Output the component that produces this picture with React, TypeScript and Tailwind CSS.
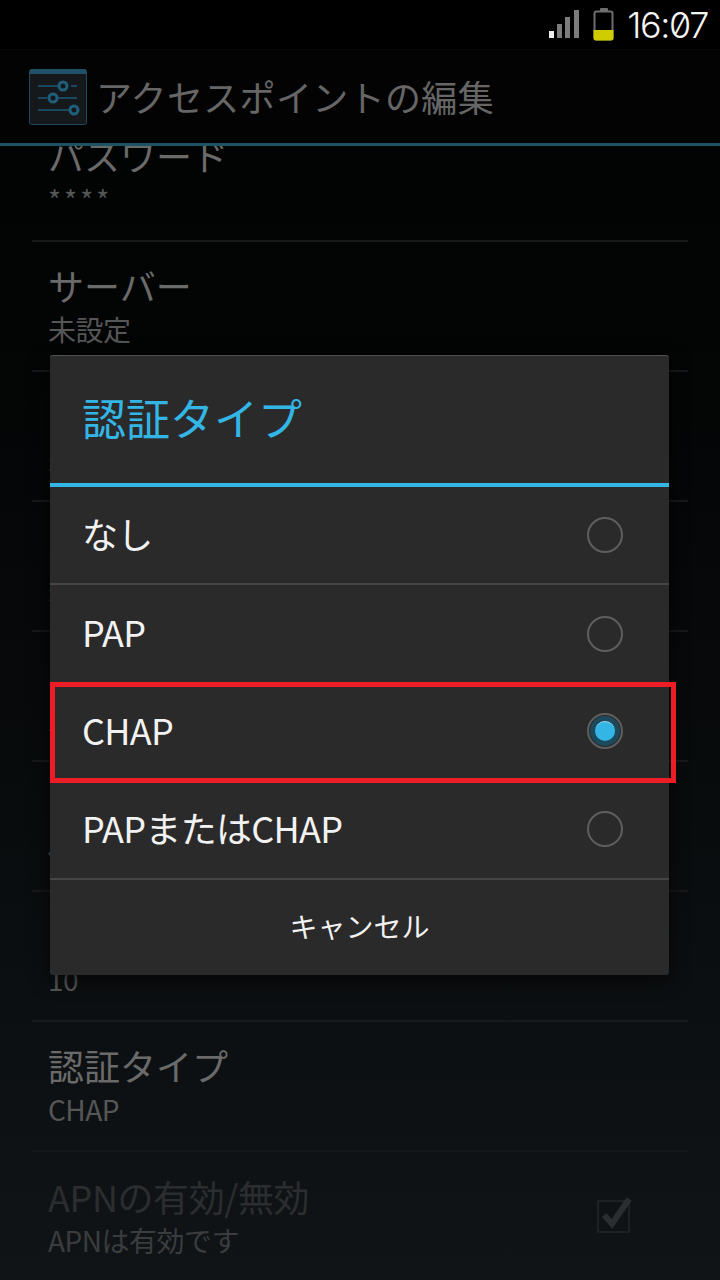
const font = "font-['Noto_Sans_CJK_JP','Noto_Sans',sans-serif]";

function Row({ title, summary, titleClass = "text-[#6a6a6a]", summaryClass = "text-[#565656] tracking-[-0.5px]", check = false, last = false }: { title: string; summary: string; titleClass?: string; summaryClass?: string; check?: boolean; last?: boolean }) {
  return (
    <div className={`h-[130px] mx-8 shrink-0 flex items-center justify-between ${last ? "" : "border-b-2 border-[#16181a]"}`}>
      <div className="pl-4 flex flex-col gap-[5px]">
        <div className={`text-[36px] leading-[40px] whitespace-nowrap ${titleClass}`}>{title}</div>
        <div className={`text-[28px] leading-[38px] whitespace-nowrap ${summaryClass}`}>{summary}</div>
      </div>
      {check && (
        <svg width="40" height="40" viewBox="0 0 40 40" className="mr-[52px] -mt-[4px]">
          <rect x="2" y="6" width="31" height="31" fill="none" stroke="#232628" strokeWidth="1.5" />
          <path d="M8 20 L16 29 L33 4" fill="none" stroke="#2b2e31" strokeWidth="6" />
        </svg>
      )}
    </div>
  );
}

function Radio({ on = false }: { on?: boolean }) {
  return (
    <div className="w-9 h-9 rounded-full border-2 border-[#5e5e5e] flex items-center justify-center shrink-0">
      {on && (
        <div className="w-[30px] h-[30px] rounded-full bg-[#1c4a5c] flex items-center justify-center">
          <div className="w-[20px] h-[20px] rounded-full bg-[#33b5e5] border-t border-[#9fdcf2]" />
        </div>
      )}
    </div>
  );
}

function Option({ label, on = false, h }: { label: string; on?: boolean; h: string }) {
  return (
    <div className={`flex items-center justify-between pl-[32px] pr-[46px] ${h}`}>
      <span className="text-[36px] text-[#f2f2f2] leading-none tracking-[-0.7px] pb-[5px]">{label}</span>
      <Radio on={on} />
    </div>
  );
}

export default function App() {
  return (
    <div className={`relative w-[720px] h-[1280px] overflow-hidden flex flex-col bg-black ${font}`}>
      <div className="h-[50px] shrink-0 bg-black flex items-center justify-end pr-[12px] border-b border-[#070707]">
        <svg width="30" height="30" viewBox="0 0 30 30" className="mr-[14px] -mt-[1px]">
          <rect x="0" y="22" width="5" height="7" fill="#f0f0f0" />
          <rect x="8" y="15" width="5" height="14" fill="#7c7c7c" />
          <rect x="16" y="8" width="5" height="21" fill="#7c7c7c" />
          <rect x="25" y="1" width="5" height="28" fill="#7c7c7c" />
        </svg>
        <svg width="21" height="33" viewBox="0 0 21 33" className="mr-[13px]">
          <rect x="7" y="0" width="8" height="4" rx="1" fill="#6e6e6e" />
          <rect x="1.5" y="3.5" width="18" height="28" rx="2" fill="none" stroke="#6e6e6e" strokeWidth="2" />
          <path d="M0.5 22 H20.5 V30 a2.5 2.5 0 0 1 -2.5 2.5 H3 a2.5 2.5 0 0 1 -2.5 -2.5 Z" fill="#cdcd00" />
        </svg>
        <span className="text-[36px] leading-none text-[#f4f4f4] tracking-[-1.4px] slashed-zero font-['Inter',sans-serif] font-light">16:07</span>
      </div>

      <div className="h-[93px] shrink-0 bg-[#030303] flex items-center pl-[29px] relative z-10">
        <svg width="58" height="56" viewBox="0 0 58 56" className="shrink-0 mt-[1px]">
          <rect x="0.5" y="0.5" width="57" height="55" rx="2" fill="#15191c" stroke="#1d4a5e" />
          <path d="M1 5 V2 a2 2 0 0 1 2 -2 H55 a2 2 0 0 1 2 2 V5 Z" fill="#1f5268" />
          <path d="M9 17 H34 M42 17 H48 M9 29 H18 M26 29 H48 M9 41 H40" stroke="#1f5a75" strokeWidth="1.5" fill="none" />
          <circle cx="34" cy="17" r="4" fill="#15191c" stroke="#1f5f7c" strokeWidth="3" />
          <circle cx="24" cy="29" r="4" fill="#15191c" stroke="#1f5f7c" strokeWidth="3" />
          <circle cx="45" cy="41" r="4" fill="#15191c" stroke="#1f5f7c" strokeWidth="3" />
        </svg>
        <span className="ml-[9px] text-[36px] leading-none text-[#666666] whitespace-nowrap pb-[2px] tracking-[0.35px]">アクセスポイントの編集</span>
      </div>
      <div className="h-[3px] shrink-0 bg-[#1b5264] relative z-10" />

      <div className="flex-1 overflow-hidden bg-gradient-to-b from-[#020303] to-[#111417]">
        <div className="-mt-[34px] flex flex-col">
          <Row title="パスワード" summary="****" summaryClass="text-[#565656] tracking-[3px]" />
          <Row title="サーバー" summary="未設定" />
          <Row title="MMSC" summary="未設定" />
          <Row title="MMSプロキシ" summary="未設定" />
          <Row title="MMSポート" summary="未設定" />
          <Row title="MCC" summary="440" />
          <Row title="MNC" summary="10" />
          <Row title="認証タイプ" summary="CHAP" />
          <Row title="APNの有効/無効" summary="APNは有効です" titleClass="text-[#2b2d2f] tracking-[-0.4px]" summaryClass="text-[#3a3c3e] tracking-[-0.5px]" check last />
        </div>
      </div>

      <div className="absolute left-[50px] top-[355px] w-[619px] h-[620px] bg-[#2a2a2a] rounded-[3px] border-t border-[#505050] shadow-[0_4px_20px_rgba(0,0,0,0.7)] flex flex-col">
        <div className="h-[127px] shrink-0 flex items-center pl-[32px]">
          <span className="text-[44px] leading-none text-[#33b5e5] pb-[5px]">認証タイプ</span>
        </div>
        <div className="h-1 shrink-0 bg-[#33b5e5]" />
        <Option label="なし" h="h-[98px] border-b-2 border-[#454545]" />
        <Option label="PAP" h="h-[97px]" />
        <Option label="CHAP" on h="h-[98px]" />
        <Option label="PAPまたはCHAP" h="h-[100px] border-b-2 border-[#454545]" />
        <div className="flex-1 flex items-center justify-center pb-[3px]">
          <span className="text-[28px] leading-none text-[#f2f2f2]">キャンセル</span>
        </div>
      </div>

      <div className="absolute left-[50px] top-[682px] w-[626px] h-[101px] border-[5px] border-[#ee1c25]" />
    </div>
  );
}
